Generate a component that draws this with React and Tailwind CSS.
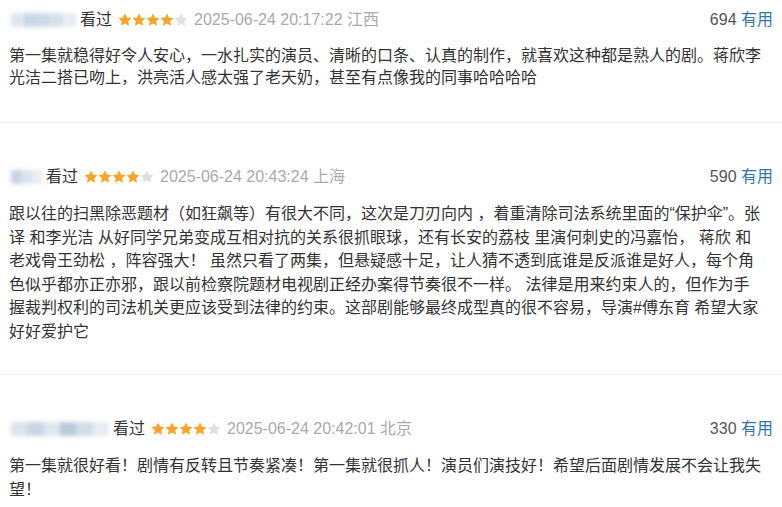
const font = { fontFamily: '"Liberation Sans", "Noto Sans CJK SC", sans-serif' };

function Star({ on }) {
  return (
    <svg width="14" height="14" viewBox="0 0 24 24" className="shrink-0">
      <path
        d="M12 0.8l3.4 7 7.7 1-5.6 5.3 1.5 7.6L12 18l-7 3.7 1.5-7.6L.9 8.8l7.7-1z"
        fill={on ? '#f7a52a' : '#e0e0e0'}
      />
    </svg>
  );
}

function Stars({ n = 4 }) {
  return (
    <span className="flex items-center">
      {[0, 1, 2, 3, 4].map(i => <Star key={i} on={i < n} />)}
    </span>
  );
}

// 模糊处理过的用户名
function BlurName({ width, blocks }) {
  return (
    <span className="relative h-[24px] shrink-0" style={{ width }}>
      <span className="absolute inset-y-[5px] left-[2px] right-[4px] flex blur-[2px]">
        {blocks.map((c, i) => (
          <span key={i} className="h-full flex-1" style={{ background: c }} />
        ))}
      </span>
    </span>
  );
}

function Review({ name, time, place, useful, lines, first, last }) {
  return (
    <div className={`${first ? 'pt-[8px] pb-[33px]' : 'pt-[42px] pb-[31px]'} px-[9px] ${last ? '' : 'border-b border-[#eeeeee]'}`}>
      <div className="flex items-center h-[24px] text-[16px]">
        {name}
        <span className="text-[#333]">看过</span>
        <span className="ml-[6px]"><Stars /></span>
        <span className="ml-[6px] text-[#aaaaaa]">{time} {place}</span>
        <span className="ml-auto text-[#555]">{useful} <span className="text-[#3377aa]">有用</span></span>
      </div>
      <div className={`mt-[13px] text-[16px] ${first ? 'leading-[22px]' : 'leading-[23.5px]'} text-[#333]`}>
        {lines.map((l, i) => (
          <div key={i} className="whitespace-nowrap">{l}</div>
        ))}
      </div>
    </div>
  );
}

export default function App() {
  return (
    <div className="w-[782px] h-[507px] overflow-hidden bg-white" style={font}>
      <Review
        first
        name={<BlurName width={71} blocks={['#dfe6ee', '#c9d6e4', '#cdd9e6', '#d6e0ea', '#e8edf2']} />}
        time="2025-06-24 20:17:22"
        place="江西"
        useful="694"
        lines={[
          '第一集就稳得好令人安心，一水扎实的演员、清晰的口条、认真的制作，就喜欢这种都是熟人的剧。蒋欣李',
          '光洁二搭已吻上，洪亮活人感太强了老天奶，甚至有点像我的同事哈哈哈哈',
        ]}
      />
      <Review
        name={<BlurName width={37} blocks={['#c6d3e2', '#d9e2ec', '#e9eef3']} />}
        time="2025-06-24 20:43:24"
        place="上海"
        useful="590"
        lines={[
          '跟以往的扫黑除恶题材（如狂飙等）有很大不同，这次是刀刃向内 ，着重清除司法系统里面的“保护伞”。张',
          '译 和李光洁 从好同学兄弟变成互相对抗的关系很抓眼球，还有长安的荔枝 里演何刺史的冯嘉怡， 蒋欣 和',
          '老戏骨王劲松 ，阵容强大！ 虽然只看了两集，但悬疑感十足，让人猜不透到底谁是反派谁是好人，每个角',
          '色似乎都亦正亦邪，跟以前检察院题材电视剧正经办案得节奏很不一样。 法律是用来约束人的，但作为手',
          '握裁判权利的司法机关更应该受到法律的约束。这部剧能够最终成型真的很不容易，导演#傅东育 希望大家',
          '好好爱护它',
        ]}
      />
      <Review
        last
        name={<BlurName width={104} blocks={['#dbe3ec', '#c9d6e3', '#dfe6ee', '#b9cada', '#d3dde8', '#e6ecf1']} />}
        time="2025-06-24 20:42:01"
        place="北京"
        useful="330"
        lines={[
          '第一集就很好看！剧情有反转且节奏紧凑！第一集就很抓人！演员们演技好！希望后面剧情发展不会让我失',
          '望！',
        ]}
      />
    </div>
  );
}
